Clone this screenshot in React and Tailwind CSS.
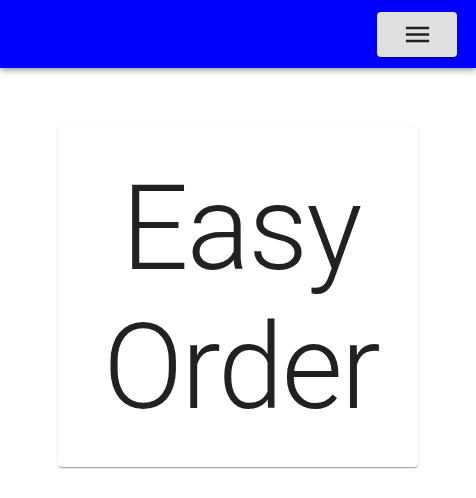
export default function App() {
  return (
    <div className="min-h-screen bg-white" style={{ fontFamily: 'Roboto, "Noto Sans", sans-serif' }}>
      {/* App bar */}
      <header className="relative z-10 flex h-[68px] items-center justify-end bg-[#0000ff] pr-[19px] shadow-[0px_2px_4px_-1px_rgba(0,0,0,0.2),0px_4px_5px_0px_rgba(0,0,0,0.14),0px_1px_10px_0px_rgba(0,0,0,0.12)]">
        <button className="flex h-[45px] w-[80px] items-center justify-center rounded-[4px] bg-[#e0e0e0] text-[#212121] shadow-[0px_3px_1px_-2px_rgba(0,0,0,0.2),0px_2px_2px_0px_rgba(0,0,0,0.14),0px_1px_5px_0px_rgba(0,0,0,0.12)]">
          <svg width="31" height="31" viewBox="0 0 24 24" fill="currentColor">
            <path d="M3 18h18v-2H3v2zm0-5h18v-2H3v2zm0-7v2h18V6H3z" />
          </svg>
        </button>
      </header>

      {/* Card */}
      <div className="mx-auto mt-[59px] w-[360px] rounded-[4px] bg-white pb-[29px] pt-[33px] shadow-[0px_2px_1px_-1px_rgba(0,0,0,0.2),0px_1px_1px_0px_rgba(0,0,0,0.14),0px_1px_3px_0px_rgba(0,0,0,0.12)]">
        <h1 className="pl-[6px] text-center text-[118px] font-light leading-[139px] tracking-[-0.01562em] text-[#212121]">
          Easy Order
        </h1>
      </div>
    </div>
  );
}
